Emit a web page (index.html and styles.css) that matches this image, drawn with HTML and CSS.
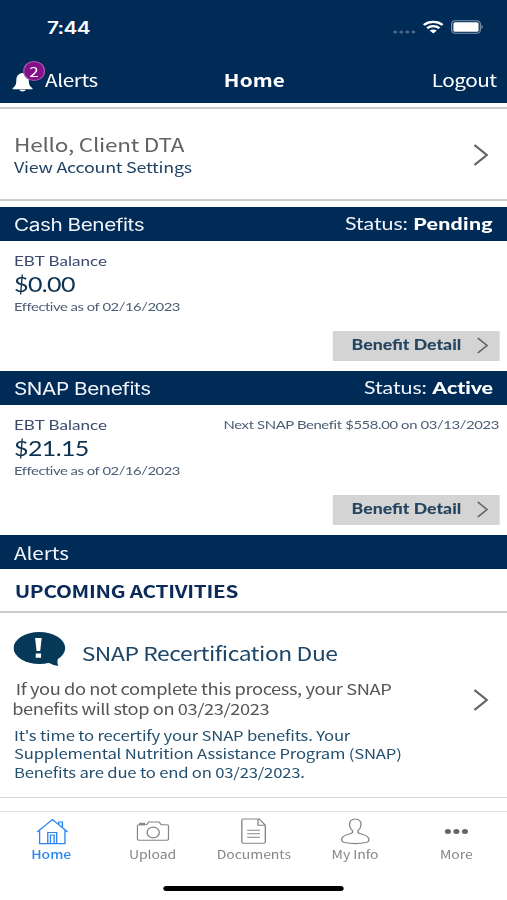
FILE: index.html
```
<!DOCTYPE html>
<html lang="en">
<head>
<meta charset="utf-8">
<title>Home</title>
<link rel="stylesheet" href="styles.css">
</head>
<body>
<div class="screen">
  <header class="header">
    <div class="status-bar">
      <span class="clock">7:44</span>
      <div class="indicators">
        <svg class="signal" width="20" height="4" viewBox="0 0 20 4"><circle cx="2.2" cy="2" r="1.6"/><circle cx="7.2" cy="2" r="1.6"/><circle cx="12.2" cy="2" r="1.6"/><circle cx="17.2" cy="2" r="1.6"/></svg>
        <svg class="wifi" width="17" height="14" viewBox="0 0 17 14"><path d="M.8 5C5 .8 12 .8 16.200 5M3.500 8.200c2.800-2.800 7.200-2.800 10 0"/><path class="solid" d="M5.600 10.500c1.700-1.500 4.100-1.500 5.800 0L8.500 13.600z"/></svg>
        <svg class="battery" width="27" height="14" viewBox="0 0 27 14"><rect class="case" x=".6" y=".7" width="23.500" height="12.600" rx="3"/><rect class="charge" x="2" y="2.300" width="20.700" height="9.400" rx="1.500"/><path class="charge-tip" d="M25 5v4c1.500-.5 1.500-3.500 0-4z"/></svg>
      </div>
    </div>
    <nav class="nav-bar">
      <a class="nav-alerts">
        <span class="bell-wrap">
          <svg class="bell" width="17" height="19" viewBox="0 0 17 19"><path d="M8.500 0C5 .6 3.400 3.400 3.400 7c0 4.500-1 6.500-3.100 8.300v1h16.400v-1C14.600 13.500 13.600 11.500 13.600 7 13.600 3.400 12 .6 8.500 0zM6 16.800c.4 2.200 4.600 2.200 5 0z"/></svg>
          <span class="badge">2</span>
        </span>
        <span>Alerts</span>
      </a>
      <h1 class="nav-title">Home</h1>
      <a class="nav-logout">Logout</a>
    </nav>
  </header>

  <main class="content">
    <section class="account">
      <div>
        <p class="hello">Hello, Client DTA</p>
        <a class="settings">View Account Settings</a>
      </div>
      <svg class="chevron" width="13" height="22" viewBox="0 0 13 22"><path d="M1.300 1 11.500 11 1.300 21"/></svg>
    </section>

    <section>
      <div class="bar"><h2>Cash Benefits</h2><p class="bar-status">Status: <b class="pending">Pending</b></p></div>
      <div class="benefit">
        <div class="benefit-top"><span class="label">EBT Balance</span></div>
        <p class="amount">$0.00</p>
        <p class="effective">Effective as of 02/16/2023</p>
        <button class="detail"><span>Benefit Detail</span><svg class="chevron" width="10" height="17" viewBox="0 0 10 17"><path d="M1 1 8.600 8.500 1 16"/></svg></button>
      </div>
    </section>

    <section>
      <div class="bar"><h2>SNAP Benefits</h2><p class="bar-status">Status: <b>Active</b></p></div>
      <div class="benefit">
        <div class="benefit-top"><span class="label">EBT Balance</span><span class="next">Next SNAP Benefit $558.00 on 03/13/2023</span></div>
        <p class="amount">$21.15</p>
        <p class="effective">Effective as of 02/16/2023</p>
        <button class="detail"><span>Benefit Detail</span><svg class="chevron" width="10" height="17" viewBox="0 0 10 17"><path d="M1 1 8.600 8.500 1 16"/></svg></button>
      </div>
    </section>

    <section>
      <div class="bar bar-alerts"><h2>Alerts</h2></div>
      <h3 class="upcoming">UPCOMING ACTIVITIES</h3>
      <article class="activity">
        <div class="activity-main">
          <div class="activity-head">
            <svg class="bubble" width="43" height="34" viewBox="0 0 43 34"><ellipse cx="21.300" cy="16" rx="21.200" ry="16"/><path d="M28 30c3 2.500 6 3.500 9 3.700-1.200-2-1-4.500-.5-7z"/><path class="mark" d="M17.800 6h5.400l-1.200 13h-3zM18.300 21.500h4.400v4.200h-4.400z"/></svg>
            <h4>SNAP Recertification Due</h4>
          </div>
          <p class="warning"><span class="first">If you do not complete this process, your SNAP</span><br>benefits will stop on 03/23/2023</p>
          <p class="info">It's time to recertify your SNAP benefits. Your<br>Supplemental Nutrition Assistance Program (SNAP)<br>Benefits are due to end on 03/23/2023.</p>
        </div>
        <svg class="chevron" width="13" height="22" viewBox="0 0 13 22"><path d="M1.300 1 11.500 11 1.300 21"/></svg>
      </article>
    </section>
  </main>

  <footer class="tab-bar">
    <nav class="tabs">
      <a class="tab active"><svg width="27" height="27" viewBox="0 0 27 27"><path d="M1.500 14 14 1.500 26.500 14M3.500 12.200v13.400h20.800V12.200M10.200 25.600V14.500h7.300v11.100M12.400 25.600v-8.600h3v8.600M19.200 6.500V4h3v5.500"/></svg><span>Home</span></a>
      <a class="tab"><svg width="27" height="27" viewBox="0 0 27 27"><path d="M.7 8.300Q.7 6.800 2 6.800h6.300L10 4h8.500l1.800 2.800h4.600q1.400 0 1.400 1.500v12.500q0 1.500-1.400 1.500H2Q.7 22.300.7 20.800z"/><path class="shutter" d="M2.700 6.700V5.200h3.800v1.500z"/><ellipse cx="13.700" cy="14.500" rx="5" ry="5.400"/></svg><span>Upload</span></a>
      <a class="tab"><svg width="27" height="27" viewBox="0 0 27 27"><path d="M4.500 1h13.200l5 6.200v16.500q0 1.500-1.300 1.500H4.700q-1.300 0-1.300-1.500V2.500Q3.400 1 4.500 1zM16.700 1v6.200h6M7.800 12.200h10.500M7.800 15.700h10.500M7.800 19.200h10.500"/></svg><span>Documents</span></a>
      <a class="tab"><svg width="27" height="27" viewBox="0 0 27 27"><path d="M13.500 1C10 1 8.600 3.700 8.800 7c.1 2.400.9 4 2.200 5.400.7 1.200.2 2.600-1 3.100-3 1.200-7 1.500-7.600 5.300-.3 2 .1 3 1.600 3.500 5.500 1.500 13.500 1.500 19 0 1.500-.5 1.900-1.500 1.600-3.500-.6-3.800-4.600-4.100-7.600-5.300-1.200-.5-1.700-1.900-1-3.100 1.300-1.400 2.100-3 2.200-5.400C18.400 3.700 17 1 13.500 1z"/></svg><span>My Info</span></a>
      <a class="tab"><svg class="dots" width="27" height="27" viewBox="0 0 27 27"><circle cx="6.500" cy="13.500" r="2.500"/><circle cx="13.500" cy="13.500" r="2.500"/><circle cx="20.500" cy="13.500" r="2.500"/></svg><span>More</span></a>
    </nav>
    <div class="home-indicator"></div>
  </footer>
</div>
</body>
</html>
```
FILE: styles.css
```
* { box-sizing: border-box; margin: 0; padding: 0; }

html, body { height: 900px; overflow: hidden; background: #fff; }

:root {
  --navy: #002b57;
  --humanist: "Noto Sans CJK JP", "Noto Sans", sans-serif;
  --geometric: Lato, sans-serif;
}

.screen {
  width: 416px;
  height: 900px;
  display: flex;
  flex-direction: column;
  transform: scaleX(1.21875);
  transform-origin: 0 0;
  font-family: var(--humanist);
  font-variant-ligatures: none;
  white-space: nowrap;
}

svg { display: block; flex: none; }
h1, h2, h3, h4 { font-weight: 400; }

.header { height: 103px; background: var(--navy); color: #fff; }

.status-bar {
  height: 54px;
  padding: 0 19px 0 38.500px;
  display: flex;
  align-items: center;
  justify-content: space-between;
}
.clock { font: 600 17px/20px Inter, sans-serif; letter-spacing: -.5px; padding-top: 1px; }
.indicators { display: flex; align-items: center; gap: 6.500px; }
.signal { fill: #4b6a8d; margin-top: 9px; margin-right: -2px; }
.wifi path { fill: none; stroke: #fff; stroke-width: 2.300; }
.wifi .solid { fill: #fff; stroke: none; }
.battery .case { fill: none; stroke: #7f95ab; stroke-width: 1; }
.battery .charge { fill: #fff; }
.battery .charge-tip { fill: #7f95ab; }

.nav-bar {
  height: 49px;
  padding: 3px 8.500px 0 10px;
  display: grid;
  grid-template-columns: 1fr auto 1fr;
  align-items: center;
  font-size: 17px;
  line-height: 24px;
}
.nav-alerts { display: flex; align-items: center; letter-spacing: -.35px; }
.bell-wrap { position: relative; width: 27px; height: 24px; padding-top: 5px; }
.bell { fill: #fff; }
.badge {
  position: absolute;
  left: 8.500px;
  top: -7px;
  width: 18.500px;
  height: 20px;
  border-radius: 50%;
  border: 1px solid #a85ab0;
  background: #86108a;
  font-size: 14px;
  line-height: 18px;
  text-align: center;
}
.nav-title { font-size: 17px; font-weight: 700; letter-spacing: .1px; }
.nav-logout { justify-self: end; letter-spacing: -.4px; }

.content { flex: 1; padding-top: 4px; }

.account {
  height: 94px;
  margin-bottom: 6px;
  padding: 1px 15px 0 11.500px;
  border-top: 2px solid #ccc;
  border-bottom: 2px solid #ccc;
  display: flex;
  align-items: center;
  justify-content: space-between;
}
.hello { color: #636363; font-size: 18.500px; line-height: 24px; letter-spacing: -.2px; }
.settings { display: block; color: #1f4264; font-size: 14.700px; line-height: 21px; letter-spacing: -.2px; }
.chevron { fill: none; stroke: #666; stroke-width: 1.900; }

.bar {
  height: 34px;
  padding: 0 11.500px;
  background: var(--navy);
  color: #f2f5fa;
  display: flex;
  align-items: center;
  justify-content: space-between;
}
.bar h2 { font: 400 17px/20px Inter, sans-serif; letter-spacing: -.36px; padding-top: 1px; }
.bar-status { font: 400 17.500px/20px var(--geometric); letter-spacing: -.05px; padding-bottom: 1px; }
.bar-status b { font-weight: 900; color: #fff; }
.bar-status .pending { letter-spacing: .25px; }
.bar-alerts h2 { font: 400 17px/24px var(--humanist); letter-spacing: -.05px; }

.benefit { height: 130px; padding: 10px 6.500px 0 11.500px; color: #1c3f60; font-family: var(--geometric); }
.benefit-top { display: flex; justify-content: space-between; line-height: 19.500px; }
.label { font-size: 14px; letter-spacing: 0; color: #3a4a6c; }
.next { font-size: 12.200px; letter-spacing: -.31px; color: #4c5d75; }
.amount { font-size: 20.500px; line-height: 26px; letter-spacing: -.5px; color: #0d3352; }
.effective { font-size: 12.200px; line-height: 20px; letter-spacing: -.39px; color: #4c5d75; }
.detail {
  width: 137px;
  height: 30px;
  margin: 14px 0 0 auto;
  padding: 0 9px 1px 16px;
  border: 0;
  background: #d4d4d4;
  color: #24445f;
  display: flex;
  align-items: center;
  justify-content: space-between;
  font: 900 14.500px/20px var(--geometric);
}
.detail .chevron { stroke-width: 1.500; }

.upcoming {
  height: 44px;
  padding: 0 12px;
  border-bottom: 2px solid #ccc;
  color: #0b2a5a;
  font-size: 17px;
  font-weight: 700;
  line-height: 43px;
  letter-spacing: -.23px;
}
.activity {
  height: 185px;
  padding: 19px 15px 0 11.500px;
  border-bottom: 1.500px solid #d8d8d8;
  display: flex;
  justify-content: space-between;
}
.activity > .chevron { margin-top: 57px; }
.activity-head { display: flex; align-items: flex-start; gap: 13px; height: 47px; margin-left: -.5px; }
.activity-head h4 { padding-top: 8px; font-size: 18.800px; line-height: 26px; letter-spacing: -.35px; color: #1d4668; }
.bubble { fill: #063858; }
.bubble .mark { fill: #fff; }
.warning { margin-left: -1.500px; color: #555; font-size: 15px; line-height: 20px; letter-spacing: -.34px; }
.warning .first { padding-left: 3px; }
.info { margin-top: 6.500px; color: #24506f; font-size: 13.700px; line-height: 18.700px; letter-spacing: -.17px; }

.tab-bar { height: 89px; border-top: 1.500px solid #ddd; background: #fff; }
.tabs { display: grid; grid-template-columns: repeat(5, 1fr); height: 73px; padding-left: .5px; }
.tab {
  padding-top: 6px;
  display: flex;
  flex-direction: column;
  align-items: center;
  color: #858585;
  font-size: 11.500px;
  line-height: 18px;
  letter-spacing: -.05px;
}
.tab svg { fill: none; stroke: currentColor; stroke-width: 1.100; }
.tab .shutter { fill: currentColor; }
.tab .dots { fill: #666; stroke: none; }
.tab.active { color: #2d86f0; font-weight: 500; }
.home-indicator { width: 148px; height: 5px; margin: 1px auto 0; border-radius: 3px; background: #000; }
```
